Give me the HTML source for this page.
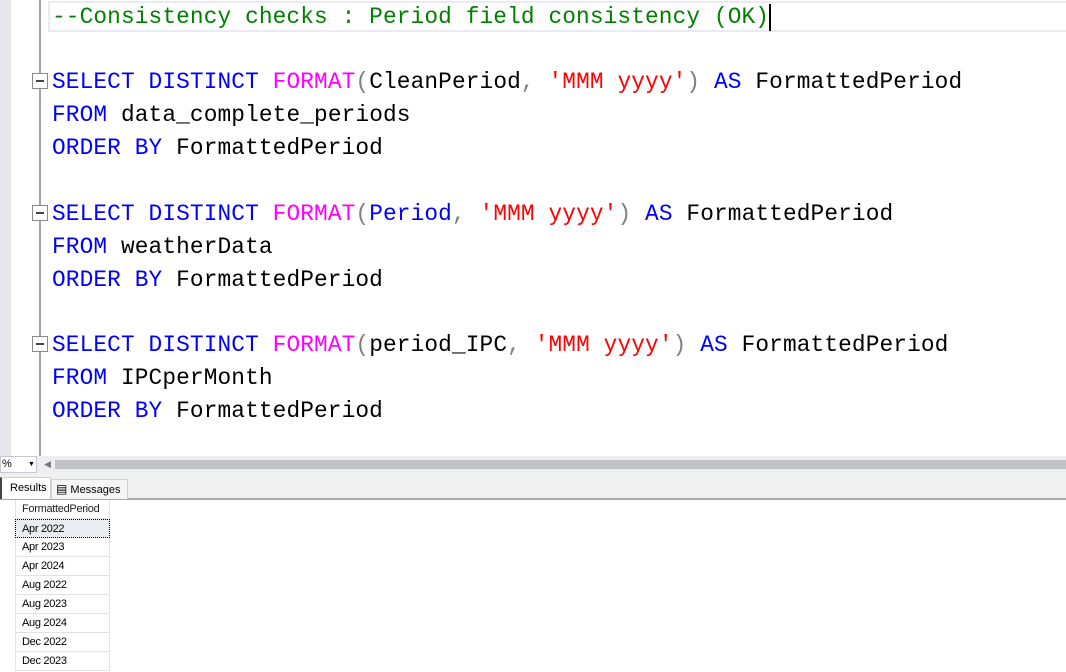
<!DOCTYPE html>
<html><head><meta charset="utf-8"><style>
*{margin:0;padding:0;box-sizing:border-box}
body{width:1066px;height:672px;background:#fff;position:relative;overflow:hidden;font-family:"Liberation Sans",sans-serif}
#gut{position:absolute;left:0;top:0;width:11px;height:456px;background:#e8e8ec}
#vl{position:absolute;left:39px;top:0;width:2px;height:456px;background:#a5a5a5}
.cur{position:absolute;left:48px;top:1px;width:1030px;height:31px;border:2px solid #eaeaf2}
.ln{position:absolute;left:52px;font-family:"Liberation Mono",monospace;font-size:22.8px;letter-spacing:0.11px;white-space:pre;line-height:33px;color:#000;margin-top:1px}
.k{color:#0000ff}.f{color:#ff00ff}.s{color:#ff0000}.g{color:#808080}.c{color:#008000}
.box{position:absolute;left:32px;width:16px;height:16px;border:1px solid #8a8a8a;background:#fff}
.box:after{content:"";position:absolute;left:3px;top:6px;width:8px;height:2px;background:#444}
#caret{position:absolute;left:769px;top:4px;width:2px;height:27px;background:#000}
#sb{position:absolute;left:0;top:456px;width:1066px;height:17px;background:#eeeef2}
#zoom{position:absolute;left:0;top:456px;width:37px;height:17px;background:#fff;border:1px solid #c8c8d0;font-size:11px;padding-left:1px;line-height:15px}
#thumb{position:absolute;left:55px;top:460px;width:1011px;height:9px;background:#c2c3c9}
#tabs{position:absolute;left:0;top:473px;width:1066px;height:27px;background:#f0f0f0;border-bottom:2px solid #a8a8a8}
.tab{position:absolute;top:4px;height:22px;font-size:11px;line-height:20px;border:1px solid #d0d0d0;border-bottom:none}
.cell{position:absolute;left:15px;width:95px;height:19px;border-bottom:1px solid #e2e2e2;border-right:1px solid #e2e2e2;border-left:1px solid #e2e2e2;font-size:11px;line-height:18px;padding-left:6px;letter-spacing:-0.3px}
</style></head><body>
<div id="gut"></div><div id="vl"></div>
<div class="cur"></div>
<div class="ln c" style="top:0">--Consistency checks : Period field consistency (OK)</div>
<div id="caret"></div>
<div class="box" style="top:73px"></div>
<div class="ln" style="top:65px"><span class="k">SELECT DISTINCT </span><span class="f">FORMAT</span><span class="g">(</span>CleanPeriod<span class="g">, </span><span class="s">'MMM yyyy'</span><span class="g">)</span> <span class="k">AS</span> FormattedPeriod</div>
<div class="ln" style="top:98px"><span class="k">FROM</span> data_complete_periods</div>
<div class="ln" style="top:131px"><span class="k">ORDER BY</span> FormattedPeriod</div>
<div class="box" style="top:205px"></div>
<div class="ln" style="top:197px"><span class="k">SELECT DISTINCT </span><span class="f">FORMAT</span><span class="g">(</span><span class="k">Period</span><span class="g">, </span><span class="s">'MMM yyyy'</span><span class="g">)</span> <span class="k">AS</span> FormattedPeriod</div>
<div class="ln" style="top:230px"><span class="k">FROM</span> weatherData</div>
<div class="ln" style="top:263px"><span class="k">ORDER BY</span> FormattedPeriod</div>
<div class="box" style="top:336px"></div>
<div class="ln" style="top:328px"><span class="k">SELECT DISTINCT </span><span class="f">FORMAT</span><span class="g">(</span>period_IPC<span class="g">, </span><span class="s">'MMM yyyy'</span><span class="g">)</span> <span class="k">AS</span> FormattedPeriod</div>
<div class="ln" style="top:361px"><span class="k">FROM</span> IPCperMonth</div>
<div class="ln" style="top:394px"><span class="k">ORDER BY</span> FormattedPeriod</div>
<div id="sb"></div><div id="zoom">%<span style="position:absolute;left:27px;font-size:7px">▼</span></div>
<div style="position:absolute;left:44px;top:459px;font-size:9px;color:#777">◀</div>
<div id="thumb"></div>
<div id="tabs">
<div class="tab" style="left:0;width:51px;background:#fff;padding-left:8px;border-left:2px solid #444">Results</div>
<div class="tab" style="left:51px;width:77px;top:6px;height:20px;background:#f5f5f5;padding-left:4px;line-height:18px"><span style="font-size:12px">▤</span> Messages</div>
</div>
<div class="cell" style="top:500px;color:#222">FormattedPeriod</div>
<div class="cell" style="top:519px;background:#e9edf2;border:1px dotted #000">Apr 2022</div>
<div class="cell" style="top:538px">Apr 2023</div>
<div class="cell" style="top:557px">Apr 2024</div>
<div class="cell" style="top:576px">Aug 2022</div>
<div class="cell" style="top:595px">Aug 2023</div>
<div class="cell" style="top:614px">Aug 2024</div>
<div class="cell" style="top:633px">Dec 2022</div>
<div class="cell" style="top:652px">Dec 2023</div>
</body></html>
